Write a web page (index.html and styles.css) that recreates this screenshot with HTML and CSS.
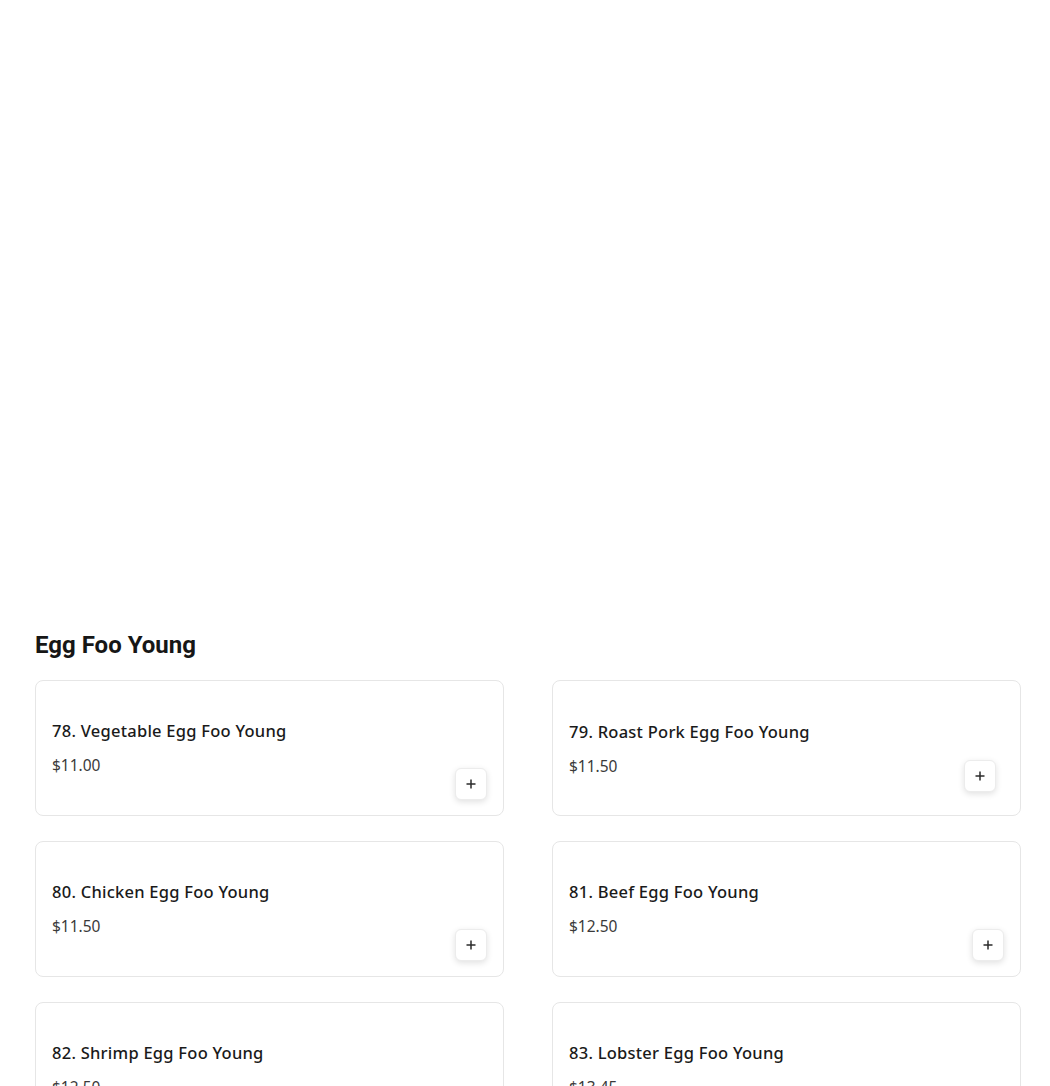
FILE: index.html
```html
<!DOCTYPE html>
<html>
<head>
<meta charset="utf-8">
<link rel="stylesheet" href="styles.css">
</head>
<body>
<div class="page">
  <div class="spacer"></div>
  <section class="category">
    <h2 class="cat-title">Egg Foo Young</h2>
    <div class="grid">
      <div class="card">
        <div class="info">
          <div class="name">78. Vegetable Egg Foo Young</div>
          <div class="price">$11.00</div>
        </div>
        <button class="add"><svg width="12" height="12" viewBox="0 0 12 12"><path d="M6 1.5v9M1.5 6h9" stroke="#2b2b2b" stroke-width="1.5" fill="none"/></svg></button>
      </div>
      <div class="card">
        <div class="info info-alt">
          <div class="name">79. Roast Pork Egg Foo Young</div>
          <div class="price">$11.50</div>
        </div>
        <button class="add add-alt"><svg width="12" height="12" viewBox="0 0 12 12"><path d="M6 1.5v9M1.5 6h9" stroke="#2b2b2b" stroke-width="1.5" fill="none"/></svg></button>
      </div>
      <div class="card">
        <div class="info">
          <div class="name">80. Chicken Egg Foo Young</div>
          <div class="price">$11.50</div>
        </div>
        <button class="add"><svg width="12" height="12" viewBox="0 0 12 12"><path d="M6 1.5v9M1.5 6h9" stroke="#2b2b2b" stroke-width="1.5" fill="none"/></svg></button>
      </div>
      <div class="card">
        <div class="info">
          <div class="name">81. Beef Egg Foo Young</div>
          <div class="price">$12.50</div>
        </div>
        <button class="add"><svg width="12" height="12" viewBox="0 0 12 12"><path d="M6 1.5v9M1.5 6h9" stroke="#2b2b2b" stroke-width="1.5" fill="none"/></svg></button>
      </div>
      <div class="card">
        <div class="info">
          <div class="name">82. Shrimp Egg Foo Young</div>
          <div class="price">$12.50</div>
        </div>
        <button class="add"><svg width="12" height="12" viewBox="0 0 12 12"><path d="M6 1.5v9M1.5 6h9" stroke="#2b2b2b" stroke-width="1.5" fill="none"/></svg></button>
      </div>
      <div class="card">
        <div class="info">
          <div class="name">83. Lobster Egg Foo Young</div>
          <div class="price">$13.45</div>
        </div>
        <button class="add"><svg width="12" height="12" viewBox="0 0 12 12"><path d="M6 1.5v9M1.5 6h9" stroke="#2b2b2b" stroke-width="1.5" fill="none"/></svg></button>
      </div>
    </div>
  </section>
</div>
</body>
</html>
```
FILE: styles.css
```css
html, body {
  margin: 0;
  padding: 0;
  background: #ffffff;
}
.page {
  padding: 0 30px 0 35px;
  font-family: "Noto Sans", "DejaVu Sans", sans-serif;
  color: #1c1c1c;
}
.spacer {
  height: 629px;
}
.cat-title {
  font-family: Roboto, "Liberation Sans", sans-serif;
  font-weight: 700;
  font-size: 24px;
  line-height: 32px;
  margin: 0 0 19px 0;
  color: #161616;
}
.grid {
  display: grid;
  grid-template-columns: 469px 469px;
  column-gap: 48px;
  row-gap: 25px;
}
.card {
  box-sizing: border-box;
  height: 136px;
  border: 1px solid #e6e6e6;
  border-radius: 8px;
  padding: 0 16px 15px 16px;
  display: flex;
  justify-content: space-between;
  align-items: flex-end;
}
.info {
  align-self: flex-start;
  padding-top: 38px;
}
.info-alt {
  padding-top: 39px;
}
.name {
  font-size: 16.5px;
  line-height: 24px;
  font-weight: 500;
  color: #1a1a1a;
  letter-spacing: 0.25px;
}
.price {
  margin-top: 10px;
  font-size: 15.5px;
  line-height: 24px;
  color: #3a3a3a;
}
.add {
  width: 32px;
  height: 32px;
  border: 1px solid #ececec;
  border-radius: 6px;
  background: #ffffff;
  box-shadow: 0 2px 6px rgba(0, 0, 0, 0.12);
  display: flex;
  align-items: center;
  justify-content: center;
  padding: 0;
}
.add-alt {
  margin-right: 8px;
  margin-bottom: 8px;
}
```
